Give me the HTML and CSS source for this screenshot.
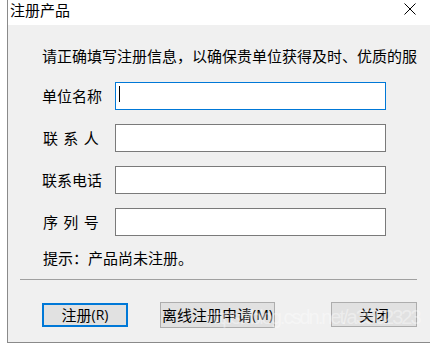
FILE: index.html
```html
<!DOCTYPE html>
<html lang="zh-CN">
<head>
<meta charset="utf-8">
<title>注册产品</title>
<link rel="stylesheet" href="styles.css">
</head>
<body>
<div class="window">
  <div class="titlebar">
    <span class="title">注册产品</span>
    <svg class="close" width="12" height="12" viewBox="0 0 12 12"><path d="M0.5 0.5 L11.5 11.5 M11.5 0.5 L0.5 11.5" stroke="#000" stroke-width="1" fill="none"/></svg>
  </div>
  <div class="client">
    <div class="intro">请正确填写注册信息，以确保贵单位获得及时、优质的服</div>
    <div class="form">
      <div class="label">单位名称</div>
      <div class="field focused"><div class="caret"></div></div>
      <div class="label spaced">联 系 人</div>
      <div class="field"></div>
      <div class="label">联系电话</div>
      <div class="field"></div>
      <div class="label spaced">序 列 号</div>
      <div class="field"></div>
    </div>
    <div class="hint">提示：产品尚未注册。</div>
    <div class="sep"></div>
    <div class="buttons">
      <div class="btn default">注册<span class="lat">(R)</span></div>
      <div class="btn wide">离线注册申请<span class="lat">(M)</span></div>
      <div class="btn last">关闭</div>
    </div>
    <div class="watermark">https://blog.csdn.net/a3562323</div>
  </div>
</div>
</body>
</html>
```
FILE: styles.css
```css
html, body {
  margin: 0;
  padding: 0;
  background: #ffffff;
}
body {
  width: 430px;
  height: 344px;
  overflow: hidden;
  font-family: "Noto Sans CJK SC", "Noto Sans", sans-serif;
  font-size: 15px;
  color: #000;
}
.window {
  margin-left: 7px;
  width: 423px;
  height: 342px;
  border-left: 1px solid #8a8a8a;
  border-bottom: 1px solid #8a8a8a;
  display: flex;
  flex-direction: column;
}
.titlebar {
  height: 25px;
  background: #fff;
  display: flex;
  align-items: flex-start;
  justify-content: space-between;
}
.title {
  margin-left: 2px;
  line-height: 20px;
  font-size: 15px;
}
.close {
  margin-top: 3px;
  margin-right: 15px;
}
.client {
  position: relative;
  flex: 1;
  background: #f0f0f0;
  padding-top: 21px;
}
.intro {
  padding-left: 34px;
  line-height: 20px;
  white-space: nowrap;
}
.form {
  margin-top: 16px;
  margin-left: 34px;
  display: grid;
  grid-template-columns: 73px 271px;
  grid-auto-rows: 28px;
  row-gap: 14px;
  align-items: center;
}
.label {
  line-height: 20px;
  white-space: pre;
}
.label.spaced {
  padding-left: 1px;
  word-spacing: 2px;
}
.field {
  box-sizing: border-box;
  height: 28px;
  background: #fff;
  border: 1px solid #7a7a7a;
}
.field.focused {
  border-color: #0078d7;
}
.caret {
  margin-left: 3px;
  margin-top: 3px;
  width: 1px;
  height: 16px;
  background: #000;
}
.hint {
  margin-top: 12px;
  padding-left: 35px;
  line-height: 20px;
}
.sep {
  margin: 11px 14px 0 12px;
  height: 1px;
  background: #a0a0a0;
}
.buttons {
  margin-top: 22px;
  padding-left: 34px;
  display: flex;
  align-items: flex-start;
}
.btn {
  box-sizing: border-box;
  height: 25px;
  width: 86px;
  background: #e1e1e1;
  border: 1px solid #adadad;
  display: flex;
  align-items: center;
  justify-content: center;
  line-height: 20px;
  font-size: 15px;
}
.btn.default {
  margin-top: 1px;
  height: 24px;
  border: 2px solid #0078d7;
}
.btn.wide {
  margin-left: 32px;
  width: 115px;
  height: 26px;
}
.btn.last {
  margin-left: 56px;
}
.lat {
  font-family: "Open Sans", "Noto Sans", sans-serif;
  font-size: 14px;
}
.watermark {
  position: absolute;
  left: 198px;
  top: 281px;
  font-family: "Liberation Sans", Arial, sans-serif;
  font-size: 20px;
  letter-spacing: -2px;
  color: rgba(255, 255, 255, 0.4);
  white-space: nowrap;
  pointer-events: none;
}
```
